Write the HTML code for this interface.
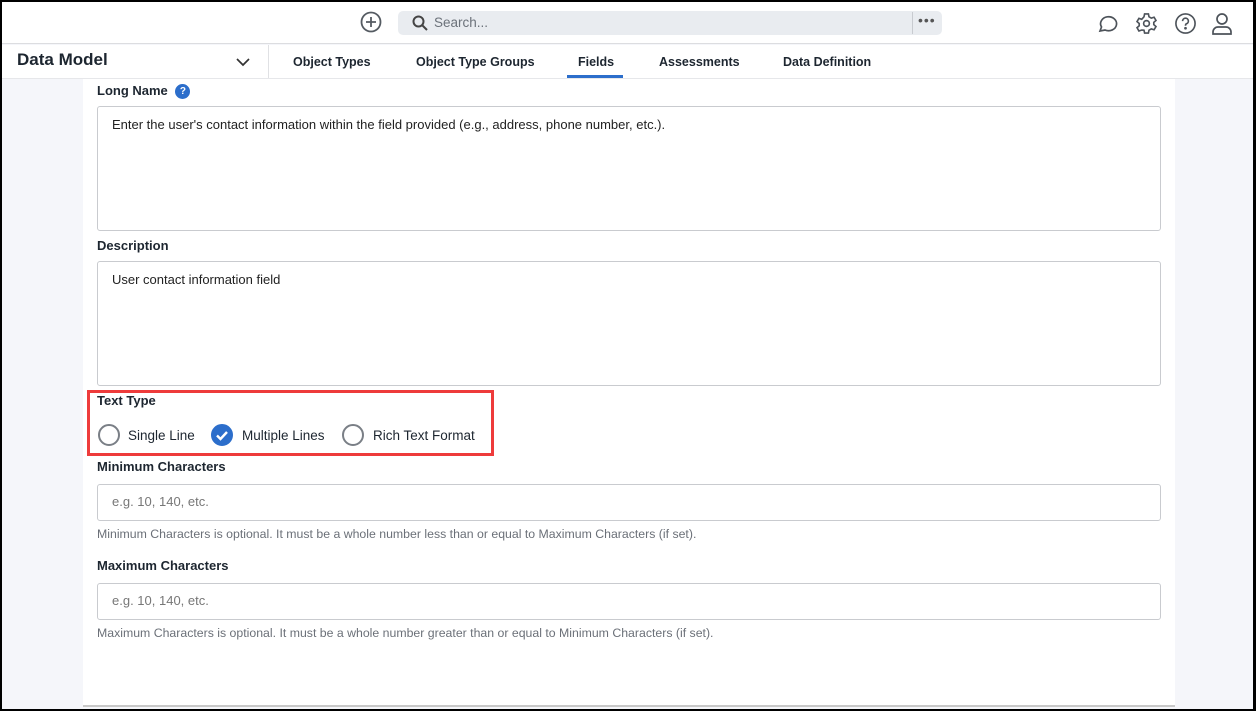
<!DOCTYPE html><html><head><style>
*{box-sizing:border-box;margin:0;padding:0}
body{width:1256px;height:711px;background:#000;font-family:"Liberation Sans",sans-serif;overflow:hidden;position:relative}
#s{position:absolute;left:2px;top:2px;width:1251px;height:707px;background:#f5f6fa;overflow:hidden}
.top{position:absolute;left:0;top:0;width:100%;height:42px;background:#fff;border-bottom:1px solid #dcdde0}
.nav{position:absolute;left:0;top:43px;width:100%;height:34px;background:#fff;border-bottom:1px solid #e6e7ea}
.panel{position:absolute;left:81px;top:77px;width:1092px;height:628px;background:#fff;border-bottom:2px solid #c8c8c8}
.lbl{position:absolute;left:14px;font-size:13px;font-weight:bold;color:#1d2630}
.ta{position:absolute;left:14px;width:1064px;border:1px solid #c9cbcf;border-radius:3px;font-size:13px;color:#222;padding:10px 14px}
.help{position:absolute;left:14px;font-size:12.3px;color:#6b7078}
.tab{position:absolute;top:10px;font-size:12.5px;font-weight:bold;color:#1d2630}
.rad{position:absolute;top:345px;width:22px;height:22px;border-radius:50%;border:2px solid #7a7f86}
.rt{position:absolute;top:349px;font-size:13.5px;color:#1d2630}
</style></head><body><div id="s">
<div class="top">
<svg style="position:absolute;left:358px;top:9px" width="22" height="22" viewBox="0 0 22 22" fill="none" stroke="#555b62" stroke-width="1.8"><circle cx="11" cy="11" r="9.5"/><path d="M11 6v10M6 11h10"/></svg>
<div style="position:absolute;left:396px;top:9px;width:544px;height:24px;background:#e9ecf0;border-radius:5px">
<svg style="position:absolute;left:14px;top:4px" width="16" height="16" viewBox="0 0 16 16" fill="none" stroke="#444" stroke-width="2"><circle cx="6.5" cy="6.5" r="5"/><path d="M10 10l5 5"/></svg>
<span style="position:absolute;left:36px;top:4px;font-size:13.5px;color:#6c727a">Search...</span>
<div style="position:absolute;left:514px;top:1px;width:1px;height:22px;background:#c8cbd0"></div>
<span style="position:absolute;left:520px;top:1px;font-size:14px;color:#555;letter-spacing:1px">•••</span></div>
<svg style="position:absolute;left:1094px;top:11px" width="24" height="22" viewBox="0 0 24 22" fill="none" stroke="#4d535a" stroke-width="1.7"><path d="M4 18l1.5-4A8 7 0 1 1 9 17z"/></svg>
<svg style="position:absolute;left:1133px;top:10px" width="23" height="23" viewBox="0 0 24 24" fill="none" stroke="#4d535a" stroke-width="1.7"><circle cx="12" cy="12" r="3"/><path d="M10 2h4l.6 3 2.4 1.4 2.9-1 2 3.4-2.3 2v2.4l2.3 2-2 3.4-2.9-1-2.4 1.4-.6 3h-4l-.6-3L7 18.8l-2.9 1-2-3.4 2.3-2v-2.4l-2.3-2 2-3.4 2.9 1L9.4 5z"/></svg>
<svg style="position:absolute;left:1172px;top:10px" width="23" height="23" viewBox="0 0 24 24" fill="none" stroke="#4d535a" stroke-width="1.7"><circle cx="12" cy="12" r="10"/><path d="M9 9.5a3 3 0 1 1 4 2.8c-.8.4-1 1-1 2"/><circle cx="12" cy="17" r=".6" fill="#4d535a"/></svg>
<svg style="position:absolute;left:1209px;top:10px" width="22" height="24" viewBox="0 0 22 24" fill="none" stroke="#4d535a" stroke-width="1.7"><circle cx="11" cy="7" r="5"/><path d="M2 22v-2a5 5 0 0 1 5-5h8a5 5 0 0 1 5 5v2z"/></svg>
</div>
<div class="nav">
<span style="position:absolute;left:15px;top:5px;font-size:17px;font-weight:bold;color:#1d2630">Data Model</span>
<svg style="position:absolute;left:234px;top:12px" width="14" height="10" viewBox="0 0 14 10" fill="none" stroke="#333" stroke-width="1.7"><path d="M1 2l6 6 6-6"/></svg>
<div style="position:absolute;left:266px;top:0;width:1px;height:33px;background:#e0e1e4"></div>
<span class="tab" style="left:291px">Object Types</span>
<span class="tab" style="left:414px">Object Type Groups</span>
<span class="tab" style="left:576px">Fields</span>
<div style="position:absolute;left:565px;top:30px;width:56px;height:3px;background:#2c6ecb"></div>
<span class="tab" style="left:657px">Assessments</span>
<span class="tab" style="left:781px">Data Definition</span>
</div>
<div class="panel">
<div class="lbl" style="top:4px">Long Name <span style="display:inline-block;width:15px;height:15px;border-radius:50%;background:#2c6ecb;color:#fff;font-size:10px;text-align:center;line-height:15px;margin-left:4px;vertical-align:1px">?</span></div>
<div class="ta" style="top:27px;height:125px">Enter the user's contact information within the field provided (e.g., address, phone number, etc.).</div>
<div class="lbl" style="top:159px">Description</div>
<div class="ta" style="top:182px;height:125px">User contact information field</div>
<div style="position:absolute;left:4px;top:311px;width:407px;height:66px;border:3px solid #ee3b3b"></div>
<div class="lbl" style="top:314px">Text Type</div>
<div class="rad" style="left:15px"></div><span class="rt" style="left:45px">Single Line</span>
<div class="rad" style="left:128px;background:#2c6ecb;border-color:#2c6ecb"><svg width="18" height="18" viewBox="0 0 18 18" fill="none" stroke="#fff" stroke-width="2.4"><path d="M4 9.5l3.5 3.5L14 6"/></svg></div><span class="rt" style="left:159px">Multiple Lines</span>
<div class="rad" style="left:259px"></div><span class="rt" style="left:290px">Rich Text Format</span>
<div class="lbl" style="top:380px">Minimum Characters</div>
<div class="ta" style="top:405px;height:37px;color:#777;padding-top:9px">e.g. 10, 140, etc.</div>
<div class="help" style="top:448px">Minimum Characters is optional. It must be a whole number less than or equal to Maximum Characters (if set).</div>
<div class="lbl" style="top:479px">Maximum Characters</div>
<div class="ta" style="top:504px;height:37px;color:#777;padding-top:9px">e.g. 10, 140, etc.</div>
<div class="help" style="top:547px">Maximum Characters is optional. It must be a whole number greater than or equal to Minimum Characters (if set).</div>
</div>
</div></body></html>
